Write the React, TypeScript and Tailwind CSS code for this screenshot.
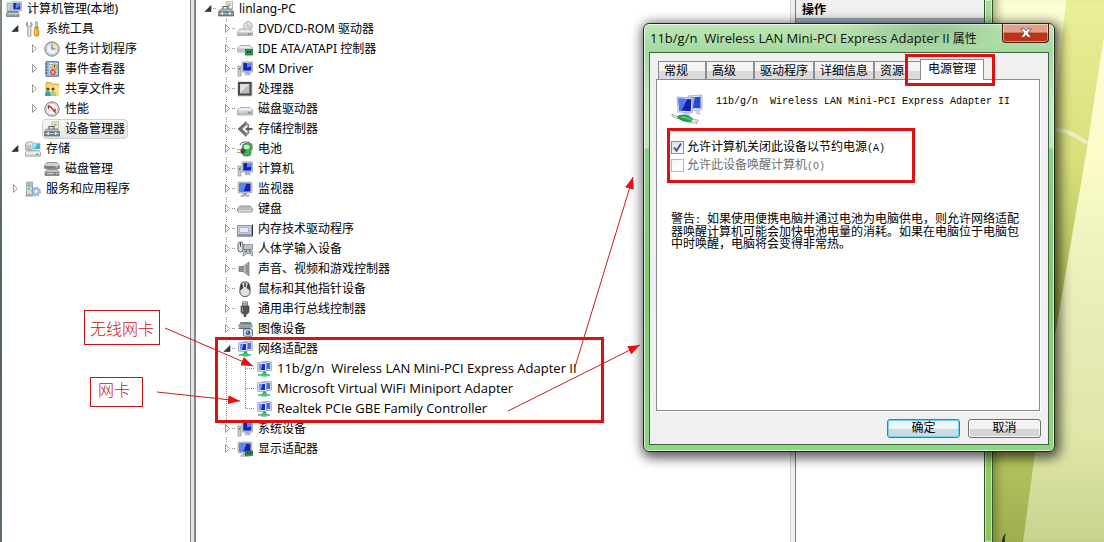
import type { ReactNode } from "react";

const monitorBig = (
  <>
    <rect x="1" y="1" width="14" height="11" rx="1" fill="#c9cdd6" stroke="#9097a3" strokeWidth=".6" />
    <rect x="2.5" y="2.5" width="11" height="8" fill="#1222b4" />
    <path d="M2.5 2.5h7l-3 8h-4z" fill="#5f86ee" />
    <path d="M6 12h4v2H6z" fill="#a5abb5" />
    <path d="M4 14h8v1.4H4z" fill="#d0d4da" stroke="#8d939e" strokeWidth=".5" />
  </>
);

const pcTower = (
  <>
    <rect x="5" y="0.8" width="10.5" height="10.4" rx=".8" fill="#c6cbd8" stroke="#8b92a4" strokeWidth=".6" />
    <rect x="6.3" y="2" width="8" height="7.6" fill="#1120b8" />
    <path d="M10 2h4.300v3.500l-4.300 1z" fill="#5a86f0" />
    <path d="M9 11.200h3l1.500 2.600H8z" fill="#b4bac2" stroke="#7c828c" strokeWidth=".4" />
    <rect x="1" y="5" width="3" height="10" fill="#c5cfc5" stroke="#7f8e7d" strokeWidth=".6" />
    <path d="M2 7h1.300v2H2z" fill="#4ea24b" />
  </>
);

const diskBody = (
  <>
    <path d="M3 8h10l2.500 3v3.500H.5V11z" fill="#e7e8ea" stroke="#8c9096" strokeWidth=".7" />
    <path d="M.8 11h14.400v3.300H.8z" fill="#b7babe" />
    <path d="M1 11h14" stroke="#f5f6f7" strokeWidth=".8" />
    <rect x="11" y="12" width="2.600" height="1.600" fill="#55b13d" />
  </>
);

const adapter = (
  <>
    <rect x="6.500" y="0.500" width="9" height="9" rx=".6" fill="#cdd6ea" stroke="#8c9ab8" strokeWidth=".6" />
    <rect x="8" y="2" width="6" height="6" fill="#4a6bdc" />
    <rect x="1.500" y="1.500" width="9" height="9" rx=".6" fill="#d4dbea" stroke="#8593b4" strokeWidth=".6" />
    <rect x="3" y="3" width="6" height="6" fill="#1a2cc0" />
    <path d="M3 3h3.500l-1.500 6H3z" fill="#6d96f2" />
    <path d="M7 10.500h3v2.300H7z" fill="#2ba65a" />
    <path d="M2 13.200h12v1.500H2z" fill="#30b469" />
    <path d="M5.500 12h5.500v3.600H5.500z" fill="#46c47c" />
  </>
);

const toolbox = (
  <>
    <path d="M8 .8h6.500V8H8z" fill="#f1f0dc" stroke="#9da08c" strokeWidth=".7" />
    <path d="M9.500 2.500h3.200v2.600H9.500z" fill="#aebf9d" />
    <path d="M5 8V5.500h5V8" fill="none" stroke="#5d666d" strokeWidth="1.200" />
    <path d="M2.500 8h11l2 3H.5z" fill="#aebac2" stroke="#67737b" strokeWidth=".6" />
    <path d="M.5 11h15v4H.5z" fill="#74858f" stroke="#4e5b63" strokeWidth=".6" />
    <path d="M1 12.500h14" stroke="#c6d2d9" strokeWidth=".8" />
    <path d="M3.500 11h1.500v3H3.500zM11 11h1.500v3H11z" fill="#dfe6ea" />
  </>
);

const ICONS: Record<string, ReactNode> = {
  manage: (
    <>
      <rect x="6" y="0.800" width="9.600" height="9.400" rx=".6" fill="#d5d9e2" stroke="#8b91a0" strokeWidth=".6" />
      <rect x="7.300" y="2" width="7" height="6.500" fill="#1527be" />
      <path d="M10 2h4.300v3L9.500 8z" fill="#5d85ee" />
      <rect x="1" y="2" width="4" height="8" fill="#c9d3da" stroke="#7f8b93" strokeWidth=".6" />
      <path d="M1.500 10.500h10l1.500 2v3H.5v-3z" fill="#8b99a2" stroke="#55626a" strokeWidth=".6" />
      <path d="M1 12.800h12" stroke="#d9e2e7" />
      <path d="M3 12h1.400v2H3zM9 12h1.400v2H9z" fill="#e5d264" />
    </>
  ),
  tools: (
    <>
      <path d="M2.500 1.200v3.300l1.700 1.200 1.700-1.200V1.200c1.600.9 1.800 3.700 0 5.200v8.200c0 1.200-3.100 1.200-3.100 0V6.400C.9 5.200.9 2 2.500 1.200z" fill="#e4e6e8" stroke="#70767b" strokeWidth=".7" />
      <path d="M10.600.8h1.800l.3 5.200h-2.400z" fill="#bfc4c8" stroke="#7b8186" strokeWidth=".5" />
      <path d="M9.500 6.500h4l-.5 2 .8 1v4.500c0 1.600-4.600 1.600-4.600 0V9.500l.8-1z" fill="#f3a81b" stroke="#a8690a" strokeWidth=".6" />
      <path d="M10.800 9v5" stroke="#ffe08a" />
    </>
  ),
  clock: (
    <>
      <circle cx="8" cy="8" r="7.200" fill="#d4d6d9" stroke="#7d8186" strokeWidth="1" />
      <circle cx="8" cy="8" r="5.600" fill="#e9f1fb" stroke="#a3a9af" strokeWidth=".6" />
      <path d="M8 8V2.400A5.600 5.600 0 0 1 13.600 8z" fill="#f7e2a8" />
      <path d="M8 3.500V8h3.500" fill="none" stroke="#5d6d86" strokeWidth="1.100" />
    </>
  ),
  event: (
    <>
      <rect x="2" y=".7" width="12.500" height="14.600" fill="#9db6da" stroke="#48648f" strokeWidth=".8" />
      <path d="M5 2.500h8M5 5h8M5 7.500h8M5 10h8M5 12.500h8" stroke="#e6eefa" />
      <path d="M1 3h2.500M1 6h2.500M1 9h2.500M1 12h2.500" stroke="#4d5a6c" />
      <path d="M10.500 2l3.200 5.500H7.300z" fill="#f7d33a" stroke="#a98a12" strokeWidth=".5" />
      <path d="M10.500 4v2.500" stroke="#4a3d00" strokeWidth=".9" />
      <circle cx="9" cy="11.300" r="2.600" fill="#e04f4f" stroke="#b83030" strokeWidth=".5" />
      <path d="M7.800 10.100l2.400 2.400m0-2.400l-2.400 2.400" stroke="#fff" strokeWidth=".9" />
    </>
  ),
  share: (
    <>
      <path d="M2 1.500h5l1 1.500h6.500v11H2z" fill="#f4cf65" stroke="#b98f2c" strokeWidth=".7" />
      <path d="M3 4.500h12v9H3z" fill="#fbe08a" />
      <circle cx="4" cy="8" r="1.500" fill="#5b4426" />
      <circle cx="9" cy="8" r="1.500" fill="#5b4426" />
      <path d="M1 15c0-3.500 1.500-5 3-5s3 1.500 3 5z" fill="#35a398" />
      <path d="M6.500 15c0-3.500 1-5 2.500-5s3 1.500 3 5z" fill="#8fcfa0" />
    </>
  ),
  perf: (
    <>
      <circle cx="8" cy="8" r="7.200" fill="#dadcdf" stroke="#7c8085" strokeWidth="1" />
      <circle cx="8" cy="8" r="5.500" fill="#fff" stroke="#b0b4b8" strokeWidth=".6" />
      <path d="M4.500 8V5l2 .5 4.500 5.500V7.500" fill="none" stroke="#c2222a" strokeWidth="1.300" />
      <path d="M5 4.500l6 7" stroke="#d93c3c" strokeWidth="1" />
    </>
  ),
  toolbox,
  storage: (
    <>
      <ellipse cx="5" cy="3.500" rx="4.500" ry="2.800" fill="#dfe2e5" stroke="#858b91" strokeWidth=".7" />
      <path d="M.5 4v5h9V4" fill="#bfc4c9" stroke="#858b91" strokeWidth=".6" />
      <rect x="7" y="2" width="8.600" height="6.500" fill="#3fb1dc" stroke="#e6eef2" strokeWidth=".9" />
      <path d="M8 3h4L9.500 7.500H8z" fill="#a8e3f6" />
      <path d="M2 9.500h12l1.500 2v3.700H.5v-3.700z" fill="#d7dadd" stroke="#7d8389" strokeWidth=".6" />
      <path d="M1 12h14" stroke="#fff" />
      <rect x="11" y="12.600" width="2.500" height="1.500" fill="#4caf3c" />
    </>
  ),
  disks: (
    <>
      <path d="M3 1.500h10l2.500 3v3H.5v-3z" fill="#d2d2d2" stroke="#6f6f6f" strokeWidth=".7" />
      <path d="M1 5h14v2.500H1z" fill="#7e7e7e" />
      <path d="M3 8.500h10l2 2.500v3.500H1V11z" fill="#c4c4c4" stroke="#6f6f6f" strokeWidth=".7" />
      <path d="M1.500 11.200h13v3h-13z" fill="#777" />
      <path d="M3 12.700h7" stroke="#e9e9e9" />
      <path d="M11.500 6h2M11.500 12.700h2" stroke="#dff0d8" />
    </>
  ),
  services: (
    <>
      <path d="M1.500 1h6v13h-6z" fill="#d3dade" stroke="#7d888e" strokeWidth=".7" />
      <path d="M2.500 3h4M2.500 5h4" stroke="#78858c" />
      <path d="M3 7h1.500v1.500H3z" fill="#48a745" />
      <path d="M.5 14h8v1.500h-8z" fill="#9ba6ac" />
      <circle cx="11" cy="10.500" r="3.300" fill="#b9d2ec" stroke="#7ba2cc" strokeWidth="1" />
      <circle cx="11" cy="10.500" r="4.300" fill="none" stroke="#86add6" strokeWidth="1.400" strokeDasharray="1.700 1.670" />
      <circle cx="11" cy="10.500" r="1.300" fill="#fff" />
    </>
  ),
  dvd: (
    <>
      <circle cx="11" cy="5" r="4.400" fill="#e3e7e6" stroke="#8e9694" strokeWidth=".7" />
      <path d="M11 5L8 1.800A4.400 4.400 0 0 1 11 .6z" fill="#b7dcc0" />
      <path d="M11 5l3 3.200a4.400 4.400 0 0 0 1.400-3.200z" fill="#c9cdea" />
      <circle cx="11" cy="5" r="1.200" fill="#fff" stroke="#888" strokeWidth=".5" />
      {diskBody}
    </>
  ),
  ide: (
    <>
      <path d="M3 4.500h10l2.500 2.500v4H.5V7z" fill="#eceded" stroke="#8a8e93" strokeWidth=".7" />
      <path d="M.8 7.300h14.400v3.400H.8z" fill="#c0c3c7" />
      <rect x="8.500" y="8.500" width="7" height="5.500" fill="#25a05c" stroke="#136b39" strokeWidth=".7" />
      <path d="M10 10h1.500v2H10zM12.500 10H14v2h-1.500z" fill="#0b3d20" />
      <path d="M10 14v1.500M12 14v1.500M14 14v1.500" stroke="#c6a53a" strokeWidth=".8" />
    </>
  ),
  pc: pcTower,
  cpu: (
    <>
      <rect x="1.500" y="1.500" width="13" height="13" fill="none" stroke="#a09354" strokeWidth="2" strokeDasharray="1 1" />
      <rect x="1" y="1" width="13.500" height="13.500" fill="#4a4a4a" />
      <rect x="3" y="3" width="9.500" height="9.500" fill="#bcbcbc" />
      <path d="M3 3h9.500L3 12.500z" fill="#dedede" />
    </>
  ),
  disk: (
    <>
      <path d="M3 6.500h10l2.500 2.500v5H.5V9z" fill="#ecedee" stroke="#8b8f94" strokeWidth=".7" />
      <path d="M.8 9.800h14.400v4H.8z" fill="#b9bcc0" />
      <path d="M1.500 11h8" stroke="#e8e9ea" />
      <rect x="11.500" y="11" width="2" height="1.700" fill="#4cae37" />
    </>
  ),
  diamond: (
    <>
      <path d="M9 .5L.8 8 9 15.500V12L5 8l4-4z" fill="#707070" stroke="#555" strokeWidth=".4" />
      <path d="M9 .5l4 3.700-2 1.900-2-2zM9 12l2-2 2 1.900-4 3.600z" fill="#9a9a9a" />
      <path d="M8 8l4-3v2h3.500v2H12v2z" fill="#5d5d5d" />
    </>
  ),
  battery: (
    <>
      <path d="M3 4C4 0 13 0 15 4v5" fill="none" stroke="#3d3d3d" strokeWidth=".9" />
      <rect x="5.500" y="2.500" width="8.500" height="12.500" rx="3" fill="#45b54e" stroke="#1d6d27" strokeWidth=".7" />
      <path d="M7 4.500c2-1 4-1 5.500 0v3c-2 1-4 1-5.500 0z" fill="#c2efbf" />
      <path d="M3.500 8c2.500-1.200 5 0 5 2s-2.500 3.400-5 2.200z" fill="#4a4a4a" />
      <path d="M0 8.800h3.500M0 11.500h3.500" stroke="#c29b3a" strokeWidth="1.100" />
    </>
  ),
  monitor: monitorBig,
  keyboard: (
    <>
      <path d="M3.500 5h9c1.500 0 3 2.500 3 4s-1 2-2 2h-11c-1 0-2-.5-2-2s1.500-4 3-4z" fill="#c9ccce" stroke="#73777b" strokeWidth=".8" />
      <path d="M3.500 6.700h9M2.600 8.200h11" stroke="#8a8e92" strokeWidth=".9" strokeDasharray="1 .8" />
      <path d="M2 9.800h12" stroke="#eff0f1" strokeWidth=".8" />
    </>
  ),
  memory: (
    <>
      <path d="M.5 4.500h14v9H.5z" fill="#c8cde6" stroke="#8b91ac" strokeWidth="1" />
      <path d="M2.500 6.500h9v5h-9z" fill="#e9ebf7" stroke="#969dbd" strokeWidth=".7" />
      <path d="M0 15h15.500V3.500" fill="none" stroke="#2f3346" strokeWidth="1" />
    </>
  ),
  hid: (
    <>
      <path d="M6 3.500h9.500v5H6z" fill="#cfd3d5" stroke="#7b8083" strokeWidth=".7" />
      <path d="M7 5h8M7 7h8" stroke="#858a8e" strokeWidth=".8" strokeDasharray="1 .8" />
      <rect x="1" y="1" width="5" height="10" rx="2.500" fill="#dcdedf" stroke="#4f5356" strokeWidth=".9" />
      <path d="M3.500 1.500v4" stroke="#333" strokeWidth="1" />
      <path d="M6.500 15c-1 0 0-5.500 1.500-6h6c1.500.5 2.500 6 1.500 6s-2-2.500-3-2.500H9.500c-1 0-2 2.500-3 2.500z" fill="#c7cdd1" stroke="#5a6064" strokeWidth=".7" />
      <circle cx="9" cy="10.800" r="1" fill="#2c86ba" />
      <circle cx="13" cy="10.800" r="1" fill="#2f9b58" />
    </>
  ),
  speaker: (
    <>
      <path d="M2 5.500h4.500v5H2z" fill="#8d9399" stroke="#5c6167" strokeWidth=".6" />
      <path d="M6 5.500L12 1v14l-6-4.500z" fill="#b5bac0" stroke="#6a7076" strokeWidth=".7" />
      <path d="M9 5l3-3v12l-3-3z" fill="#8a9096" />
    </>
  ),
  mouse: (
    <>
      <path d="M5.500 1C3 3 2.500 9 3 12c.5 2 2 3.500 5 3.500s4.500-1.500 5-3.500c.5-3 0-9-2.500-11z" fill="#e2e2e2" stroke="#444" strokeWidth=".9" />
      <path d="M5 1.500C3 4 3 7 3 9.500L6.500 7zM11 1.500C13 4 13 7 13 9.500L9.500 7z" fill="#444" />
      <path d="M8 2v4" stroke="#222" strokeWidth="1.400" />
    </>
  ),
  usb: (
    <>
      <path d="M5.500.8h5V5h-5z" fill="#d5d7d9" stroke="#6b6e71" strokeWidth=".8" />
      <path d="M7 2.200v1.500M9 2.200v1.500" stroke="#4a4c4e" />
      <path d="M4 5h8v5.500c0 1.500-1.500 2.500-3 2.500v2.500H7V13c-1.500 0-3-1-3-2.500z" fill="#55585b" stroke="#333" strokeWidth=".6" />
      <path d="M5.500 6v5" stroke="#94989b" />
    </>
  ),
  camera: (
    <>
      <path d="M3.500 1h10l2 2.500h-13z" fill="#6d8490" />
      <path d="M1 4l13-.5 1.500 2.500H3z" fill="#a6bac3" stroke="#536872" strokeWidth=".6" />
      <path d="M1.500 6.500h12V8h-12z" fill="#5d707a" />
      <rect x="6.500" y="8" width="9" height="7.300" rx="1" fill="#cdd7dc" stroke="#50606a" strokeWidth=".8" />
      <circle cx="11" cy="11.700" r="2.700" fill="#344a78" stroke="#e8eef2" strokeWidth=".8" />
      <circle cx="10.500" cy="11.200" r="1" fill="#8fc3ee" />
    </>
  ),
  adapter,
  display: (
    <>
      {monitorBig}
      <rect x="8.500" y="10" width="7" height="4.500" fill="#24945c" stroke="#0f5c34" strokeWidth=".7" />
      <path d="M10 11.300h1.500v1.600H10zM12.700 11.300h1.500v1.600h-1.500z" fill="#0a3b21" />
      <path d="M10 15.500v-1M12 15.500v-1M14 15.500v-1" stroke="#b99a32" strokeWidth=".8" />
    </>
  ),
};

function Icon({ name }: { name: string }) {
  return (
    <svg viewBox="0 0 16 16" className="size-4 shrink-0" aria-hidden="true">
      {ICONS[name]}
    </svg>
  );
}

type State = "open" | "closed" | "leaf";

function Twist({ state, lines, last }: { state: State; lines?: "root" | "branch" | "leaf"; last?: boolean }) {
  const dots = { stroke: "#8a8a8a", strokeWidth: 1, strokeDasharray: "1 1" };
  return (
    <svg viewBox="0 0 14 20" className="h-5 w-3.5" aria-hidden="true">
      {lines === "branch" && <path d={last ? "M5.500 0v4" : "M5.500 0v4M5.500 18v2"} {...dots} />}
      {lines === "leaf" && <path d={last ? "M5.500 0v10" : "M5.500 0v20"} {...dots} />}
      {lines === "leaf" && <path d="M5 9.500h9" {...dots} />}
      {(lines === "branch" || lines === "root") && <path d="M11 9.500h3" {...dots} />}
      {state === "closed" && <path d="M4.500 5.500v8l4-4z" fill="#fff" stroke="#9a9a9a" />}
      {state === "open" && <path d="M9 6.500v6H3z" fill="#333" stroke="#222" strokeWidth=".6" />}
    </svg>
  );
}

type RowProps = {
  icon: string;
  text: string;
  indent: string;
  state?: State;
  lines?: "root" | "branch" | "leaf";
  last?: boolean;
  guide?: boolean;
  selected?: boolean;
  noTwist?: boolean;
};

function Row({ icon, text, indent, state = "leaf", lines, last, guide, selected, noTwist }: RowProps) {
  return (
    <div role="treeitem" aria-selected={!!selected} className={`flex h-5 items-center whitespace-pre ${indent}`}>
      {guide && (
        <svg viewBox="0 0 19 20" className="h-5 w-[19px] shrink-0" aria-hidden="true">
          <path d="M5.500 0v20" stroke="#8a8a8a" strokeDasharray="1 1" />
        </svg>
      )}
      {!noTwist &&
        (state === "leaf" ? (
          <span className="shrink-0">
            <Twist state={state} lines={lines} last={last} />
          </span>
        ) : (
          <button type="button" aria-label={text} aria-expanded={state === "open"} className="shrink-0">
            <Twist state={state} lines={lines} last={last} />
          </button>
        ))}
      <span
        className={`flex h-5 items-center gap-[5px] rounded-sm border pr-0.5 pl-px ${
          selected ? "border-[#d0d0d0] bg-linear-to-b from-[#f8f8f8] to-[#e4e4e4]" : "border-transparent"
        }`}
      >
        <Icon name={icon} />
        <span>{text}</span>
      </span>
    </div>
  );
}

const CATEGORIES: [string, string][] = [
  ["dvd", "DVD/CD-ROM 驱动器"],
  ["ide", "IDE ATA/ATAPI 控制器"],
  ["pc", "SM Driver"],
  ["cpu", "处理器"],
  ["disk", "磁盘驱动器"],
  ["diamond", "存储控制器"],
  ["battery", "电池"],
  ["pc", "计算机"],
  ["monitor", "监视器"],
  ["keyboard", "键盘"],
  ["memory", "内存技术驱动程序"],
  ["hid", "人体学输入设备"],
  ["speaker", "声音、视频和游戏控制器"],
  ["mouse", "鼠标和其他指针设备"],
  ["usb", "通用串行总线控制器"],
  ["camera", "图像设备"],
];

const ADAPTERS = [
  "11b/g/n  Wireless LAN Mini-PCI Express Adapter II",
  "Microsoft Virtual WiFi Miniport Adapter",
  "Realtek PCIe GBE Family Controller",
];

function ConsoleTree() {
  return (
    <nav role="tree" aria-label="计算机管理" className="-mt-px w-[188px] shrink-0 overflow-hidden">
      <Row icon="manage" text="计算机管理(本地)" indent="pl-0.5" noTwist />
      <Row icon="tools" text="系统工具" indent="pl-[7px]" state="open" />
      <Row icon="clock" text="任务计划程序" indent="pl-[26px]" state="closed" />
      <Row icon="event" text="事件查看器" indent="pl-[26px]" state="closed" />
      <Row icon="share" text="共享文件夹" indent="pl-[26px]" state="closed" />
      <Row icon="perf" text="性能" indent="pl-[26px]" state="closed" />
      <Row icon="toolbox" text="设备管理器" indent="pl-[26px]" selected />
      <Row icon="storage" text="存储" indent="pl-[7px]" state="open" />
      <Row icon="disks" text="磁盘管理" indent="pl-[26px]" />
      <Row icon="services" text="服务和应用程序" indent="pl-[7px]" state="closed" />
    </nav>
  );
}

function DeviceTree() {
  return (
    <main role="tree" aria-label="设备管理器" className="-mt-px min-w-0 flex-1 overflow-hidden">
      <Row icon="toolbox" text="linlang-PC" indent="pl-1.5" state="open" lines="root" />
      {CATEGORIES.map(([icon, text]) => (
        <Row key={text} icon={icon} text={text} indent="pl-[25px]" state="closed" lines="branch" />
      ))}
      <Row icon="adapter" text="网络适配器" indent="pl-[25px]" state="open" lines="branch" />
      <div role="group" className="font-['Open_Sans','Noto_Sans_CJK_SC',sans-serif] text-[13px]">
        {ADAPTERS.map((text, i) => (
          <Row key={text} icon="adapter" text={text} indent="pl-[25px]" guide lines="leaf" last={i === 2} />
        ))}
      </div>
      <Row icon="pc" text="系统设备" indent="pl-[25px]" state="closed" lines="branch" />
      <Row icon="display" text="显示适配器" indent="pl-[25px]" state="closed" lines="branch" last />
    </main>
  );
}

function Wallpaper() {
  return (
    <svg viewBox="0 0 111 542" preserveAspectRatio="none" className="h-full w-full" aria-hidden="true">
      <defs>
        <linearGradient id="beam" x1="0" y1="0" x2="0" y2="1">
          <stop offset="0" stopColor="#ebef9a" />
          <stop offset=".3" stopColor="#d8df7a" />
          <stop offset=".6" stopColor="#a9b552" />
          <stop offset=".85" stopColor="#b4c25e" />
          <stop offset="1" stopColor="#9fae4e" />
        </linearGradient>
        <linearGradient id="pale" x1="0" y1="0" x2="0" y2="1">
          <stop offset="0" stopColor="#fdfed8" />
          <stop offset=".25" stopColor="#fbfcc8" />
          <stop offset=".5" stopColor="#eaeeba" />
          <stop offset=".8" stopColor="#dfe6a8" />
          <stop offset="1" stopColor="#c9d28e" />
        </linearGradient>
        <linearGradient id="glow" x1="0" y1="0" x2="0" y2="1">
          <stop offset="0" stopColor="#fdffd6" />
          <stop offset="1" stopColor="#dfe58a" />
        </linearGradient>
      </defs>
      <rect width="111" height="542" fill="url(#beam)" />
      <path d="M0 0h73L50 210 0 260z" fill="url(#glow)" />
      <path d="M55 129c14-1 26 4 39 14" fill="none" stroke="#eef0c4" strokeWidth="4" />
      <path d="M111 36L94 148 42 453 30 542h81z" fill="url(#pale)" />
      <path d="M13 533c-2 2-4 5-4 9h3c-1-3 0-6 1-9z" fill="#1c2410" />
    </svg>
  );
}

const TABS = ["常规", "高级", "驱动程序", "详细信息", "资源"];

function Hint({ children }: { children: ReactNode }) {
  return <span className="font-['Liberation_Mono',monospace] text-[10px]">{children}</span>;
}

function Option({ id, label, hint, checked, disabled }: { id: string; label: string; hint: string; checked?: boolean; disabled?: boolean }) {
  return (
    <div className="flex h-[18px] items-center gap-[3px]">
      <span className="grid size-[13px] shrink-0">
        <input
          id={id}
          type="checkbox"
          defaultChecked={checked}
          disabled={disabled}
          className="peer [grid-area:1/1] size-[13px] appearance-none border border-[#8e8f8f] bg-linear-to-br from-[#dcdfe3] to-white disabled:border-[#b8b8b8] disabled:from-[#f6f6f6]"
        />
        <svg viewBox="0 0 13 13" className="pointer-events-none invisible [grid-area:1/1] size-[13px] peer-checked:visible" aria-hidden="true">
          <path d="M3 6.500l2.500 3.200L10 2.500" fill="none" stroke="#3f5a9b" strokeWidth="2" />
        </svg>
      </span>
      <label htmlFor={id} className={`pt-0.5 whitespace-nowrap ${disabled ? "text-[#6d6d6d]" : "text-black"}`}>
        {label}
        <Hint>{hint}</Hint>
      </label>
    </div>
  );
}

function PropertiesDialog() {
  return (
    <section
      role="dialog"
      aria-label="11b/g/n  Wireless LAN Mini-PCI Express Adapter II 属性"
      className="absolute top-[23px] left-[643px] w-[412px] rounded-md border border-[#1d2b1d] bg-[linear-gradient(to_bottom,#bfe6b6_0px,#a5d9a0_28px,#c5e8be_80px,#bfe3b8_124px,#8bd184_125px,#82cc6c_260px,#8fd684_100%)] px-[5px] pb-1.5 shadow-[2px_3px_12px_3px_rgba(0,0,0,0.65),inset_0_0_0_1px_rgba(255,255,255,0.65)]"
    >
      <header className="flex h-7 items-start justify-between bg-[radial-gradient(ellipse_90px_20px_at_70%_20%,rgba(90,140,100,0.35),transparent)] pl-px">
        <h1 className="pt-[5px] leading-[18px] whitespace-pre text-[#111]">
          <span className="font-['Open_Sans',sans-serif] text-[13px]">11b/g/n  Wireless LAN Mini-PCI Express Adapter II</span> 属性
        </h1>
        <button
          type="button"
          aria-label="关闭"
          className="flex h-[19px] w-[47px] items-center justify-center rounded-b border border-t-0 border-[#4a1a10] bg-linear-to-b from-[#e2a08e] from-45% to-[#bd3414] to-50% shadow-[inset_0_0_0_1px_rgba(255,255,255,0.45)]"
        >
          <svg viewBox="0 0 12 10" className="h-2.5 w-3" aria-hidden="true">
            <path d="M.8.8h3.500L6 2.900 7.700.8h3.500L8 5l3.200 4.200H7.700L6 7.100 4.300 9.200H.8L4 5z" fill="#fff" stroke="#5a4a4a" strokeWidth=".8" />
          </svg>
        </button>
      </header>
      <div className="border border-[#41633f] bg-[#f0f0f0] pt-1.5 pr-2 pb-1.5 pl-1.5 font-['Liberation_Mono','Noto_Sans_CJK_SC',monospace]">
        <div role="tablist" className="flex h-5 items-end pl-0.5 leading-4">
          {TABS.map((tab) => (
            <button
              key={tab}
              type="button"
              role="tab"
              aria-selected="false"
              className="h-[18px] min-w-12 border border-b-0 border-[#898c95] bg-linear-to-b from-[#f3f3f3] from-50% to-[#dadada] to-55% px-[5px] pt-0.5 text-left whitespace-nowrap"
            >
              {tab}
            </button>
          ))}
          <button
            type="button"
            role="tab"
            aria-selected="true"
            className="relative -mb-px -ml-0.5 h-[21px] w-16 border border-b-0 border-[#898c95] bg-white text-center whitespace-nowrap"
          >
            电源管理
          </button>
        </div>
        <div role="tabpanel" className="min-h-[332px] border border-[#898c95] bg-white pt-3.5 pl-3.5 shadow-[1px_1px_0_#fff]">
          <div className="flex gap-[11px]">
            <svg viewBox="0 0 34 30" className="h-[30px] w-[34px] shrink-0" aria-hidden="true">
              <path d="M17 2l14-1v14l-3 2-10-1z" fill="#d8e2f2" stroke="#9aabc8" strokeWidth=".8" />
              <path d="M19 3.500l10.500-.8v11.500L19 14z" fill="#2a49cf" />
              <path d="M19 3.500l5-.4-2 11H19z" fill="#7da2f5" />
              <path d="M6 3l16 1-1 15-14-1z" fill="#e0e7f4" stroke="#93a3c2" strokeWidth=".8" />
              <path d="M7.500 4.500l13 .8-.8 12-11.500-.8z" fill="#1120b4" />
              <path d="M7.500 4.500l9 .6-6 11.500-2.300-.1z" fill="#4d79ea" />
              <path d="M13 19h5l2 3h-8zM24 16l4 1 2 4-5-1z" fill="#c8cfdb" />
              <path d="M1 20l7 3-1 2-6-3z" fill="#e4e8e4" stroke="#7e877e" strokeWidth=".6" />
              <path d="M7 22c5-2 10-1 15 3l-2 3c-5 0-9-1-13-4z" fill="#1fa64c" stroke="#0e6f2e" strokeWidth=".6" />
              <path d="M10 23c4 0 7 1 10 3" stroke="#86e39c" fill="none" />
              <path d="M21 25l6 1-1 3.500-6-1z" fill="#e4e8e4" stroke="#7e877e" strokeWidth=".6" />
            </svg>
            <p className="pt-px text-[10px] leading-[14px] whitespace-pre">11b/g/n  Wireless LAN Mini-PCI Express Adapter II</p>
          </div>
          <div className="mt-1 -ml-1 w-[248px] border-3 border-[#e01010] px-px pt-[7px] pb-1.5">
            <Option id="allow-off" label="允许计算机关闭此设备以节约电源" hint="(A)" checked />
            <Option id="allow-wake" label="允许此设备唤醒计算机" hint="(O)" disabled />
          </div>
          <p className="mt-[31px] leading-3 whitespace-nowrap">
            警告<Hint>{": "}</Hint>如果使用便携电脑并通过电池为电脑供电，则允许网络适配
            <br />
            器唤醒计算机可能会加快电池电量的消耗。如果在电脑位于电脑包
            <br />
            中时唤醒，电脑将会变得非常热。
          </p>
        </div>
        <footer className="mt-2 -mr-px flex justify-end gap-2">
          <button
            type="button"
            className="h-[19px] w-[73px] rounded-[3px] border border-[#2a86b8] bg-linear-to-b from-[#eff6f9] from-50% to-[#cddbe1] to-55% leading-[18px] shadow-[inset_0_0_0_1px_#6fd3f5]"
          >
            确定
          </button>
          <button
            type="button"
            className="h-[19px] w-[73px] rounded-[3px] border border-[#707070] bg-linear-to-b from-[#f2f2f2] from-50% to-[#d4d4d4] to-55% leading-[18px] shadow-[inset_0_0_0_1px_#fafafa]"
          >
            取消
          </button>
        </footer>
      </div>
    </section>
  );
}

const ARROWS = [
  { from: [165, 328], to: [253, 366] },
  { from: [157, 392], to: [240, 401] },
  { from: [575, 367], to: [633, 177] },
  { from: [508, 411], to: [640, 345] },
];

function Annotations() {
  return (
    <div className="pointer-events-none absolute inset-0 font-['Noto_Sans_CJK_SC',sans-serif] text-base text-[#c81414]">
      <div className="absolute top-[337px] left-[215px] h-[86px] w-[389px] border-3 border-[#e01010]" />
      <div className="absolute top-[54px] left-[905px] h-8 w-[90px] border-3 border-[#e01010]" />
      <div className="absolute top-[310px] left-[84px] flex h-[35px] w-[76px] items-center justify-center border border-[#c81414] font-light whitespace-nowrap">
        无线网卡
      </div>
      <div className="absolute top-[377px] left-[90px] h-[30px] w-[53px] border border-[#c81414] pl-[7px] leading-[22px] font-light whitespace-nowrap">
        网卡
      </div>
      <svg className="absolute inset-0 h-full w-full" aria-hidden="true">
        <defs>
          <marker id="head" viewBox="0 0 12 9" refX="12" refY="4.500" markerWidth="12" markerHeight="9" markerUnits="userSpaceOnUse" orient="auto">
            <path d="M0 0l12 4.500L0 9z" fill="#e81010" />
          </marker>
        </defs>
        {ARROWS.map(({ from, to }) => (
          <line key={from[0]} x1={from[0]} y1={from[1]} x2={to[0]} y2={to[1]} stroke="#cc1a1a" markerEnd="url(#head)" />
        ))}
      </svg>
    </div>
  );
}

export default function App() {
  return (
    <div className="relative flex min-h-screen overflow-hidden bg-white font-['Noto_Sans','Noto_Sans_CJK_SC',sans-serif] text-xs text-black">
      <div className="flex min-w-0 flex-1">
        <div className="w-0.5 shrink-0 bg-linear-to-b from-[#7d8a86] via-[#4f6462] to-[#5d6f5c]" />
        <ConsoleTree />
        <div className="w-1.5 shrink-0 border-r-2 border-l border-r-[#85858b] border-l-[#85858b] bg-[#e6e6ec]" />
        <DeviceTree />
        <div className="w-1.5 shrink-0 border-r border-l border-r-[#77777d] border-l-[#d5d5d5] bg-[#f0f0f0]" />
        <aside className="w-[188px] shrink-0">
          <h2 className="h-[19px] border-b border-[#9a9a9a] bg-[#f0f0f0] pl-1.5 leading-5 font-bold">操作</h2>
          <div className="h-5 bg-[#9fb4c6]" />
        </aside>
        <div className="w-[9px] shrink-0 border-x border-[#35562f] bg-linear-to-b from-[#a9dc9f] to-[#8cc65c] shadow-[inset_0_0_0_1px_rgba(255,255,255,0.5)]" />
      </div>
      <div className="grid w-[111px] shrink-0">
        <div className="[grid-area:1/1] overflow-hidden">
          <Wallpaper />
        </div>
        <div className="[grid-area:1/1] shadow-[inset_10px_0_8px_-6px_rgba(60,80,20,0.45)]" />
      </div>
      <PropertiesDialog />
      <Annotations />
    </div>
  );
}
